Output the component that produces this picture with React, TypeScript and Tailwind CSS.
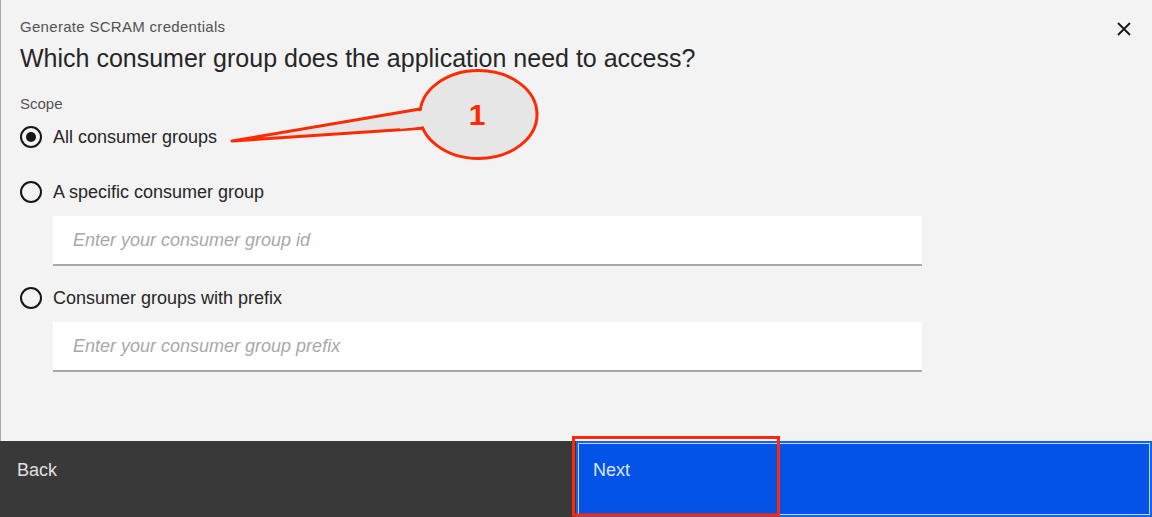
import React, { useState } from 'react';

const OPTIONS = [
    { id: 'all', label: 'All consumer groups', placeholder: null },
    { id: 'specific', label: 'A specific consumer group', placeholder: 'Enter your consumer group id' },
    { id: 'prefix', label: 'Consumer groups with prefix', placeholder: 'Enter your consumer group prefix' }
];

const Radio: React.FC<{ checked: boolean }> = ({ checked }) => (
    <span className="w-[22px] h-[22px] rounded-full border-2 border-[#161616] flex items-center justify-center shrink-0">
        {checked && <span className="w-[10px] h-[10px] rounded-full bg-[#161616]" />}
    </span>
);

const App: React.FC = () => {
    const [scope, setScope] = useState('all');

    return (
        <div className="relative w-[1152px] h-[517px] bg-[#f3f3f3] flex flex-col overflow-hidden font-['Liberation_Sans',Arial,sans-serif]">
            <div className="flex-1 border-l border-[#a8a8a8] pl-[19px] pt-[17px]">
                <div className="text-[15px] leading-[20px] text-[#525252] tracking-[0.3px]">Generate SCRAM credentials</div>
                <h2 className="mt-[5px] text-[25px] leading-[32px] text-[#262626]">Which consumer group does the application need to access?</h2>

                <div className="mt-[20px] text-[15px] leading-[20px] text-[#525252]">Scope</div>

                <div className="mt-[7px] flex flex-col">
                    {OPTIONS.map((opt, i) => (
                        <div key={opt.id} className={i === 0 ? '' : i === 1 ? 'mt-[23px]' : 'mt-[16px]'}>
                            <button onClick={() => setScope(opt.id)} className="h-[32px] flex items-center gap-[11px] text-[18px] text-[#262626]">
                                <Radio checked={scope === opt.id} />
                                {opt.label}
                            </button>
                            {opt.placeholder && (
                                <input
                                    placeholder={opt.placeholder}
                                    className="mt-[8px] ml-[33px] w-[869px] h-[50px] bg-white border-b-2 border-[#a8a8a8] px-[20px] text-[18px] italic outline-none placeholder:text-[#a8a8a8]"
                                />
                            )}
                        </div>
                    ))}
                </div>
            </div>

            <button className="absolute top-[22px] left-[1117px] w-[14px] h-[14px]">
                <svg viewBox="0 0 14 14" width="14" height="14">
                    <path d="M1 1 L13 13 M13 1 L1 13" stroke="#161616" strokeWidth="1.8" />
                </svg>
            </button>

            <div className="h-[76px] grid grid-cols-2">
                <button className="bg-[#393939] text-left px-[17px] pb-[18px] text-[18px] text-[#e0e0e0]">Back</button>
                <button className="bg-[#0353e9] text-left px-[15px] pb-[18px] text-[18px] text-[#dce6ff] border-2 border-[#0f62fe] shadow-[inset_0_0_0_1px_#c6d6ff]">Next</button>
            </div>

            {/* annotations */}
            <svg className="absolute inset-0 pointer-events-none" width="1152" height="517">
                <path d="M232 141 L420 109 L426 128 Z" fill="#e6e6e6" stroke="#ff2a00" strokeWidth="3" strokeLinejoin="round" />
                <ellipse cx="478.5" cy="114.5" rx="58.5" ry="44" fill="#e6e6e6" stroke="#ff2a00" strokeWidth="3" />
                <path d="M400 115 L423 110.5 L426 126 L400 129 Z" fill="#e6e6e6" />
                <text x="477" y="125" textAnchor="middle" fontSize="30" fontWeight="bold" fill="#ff2a00" fontFamily="Liberation Sans, Arial, sans-serif">1</text>
                <rect x="573.5" y="437.5" width="205" height="77.5" fill="none" stroke="#ff2a00" strokeWidth="3" />
            </svg>
        </div>
    );
};

export default App;
